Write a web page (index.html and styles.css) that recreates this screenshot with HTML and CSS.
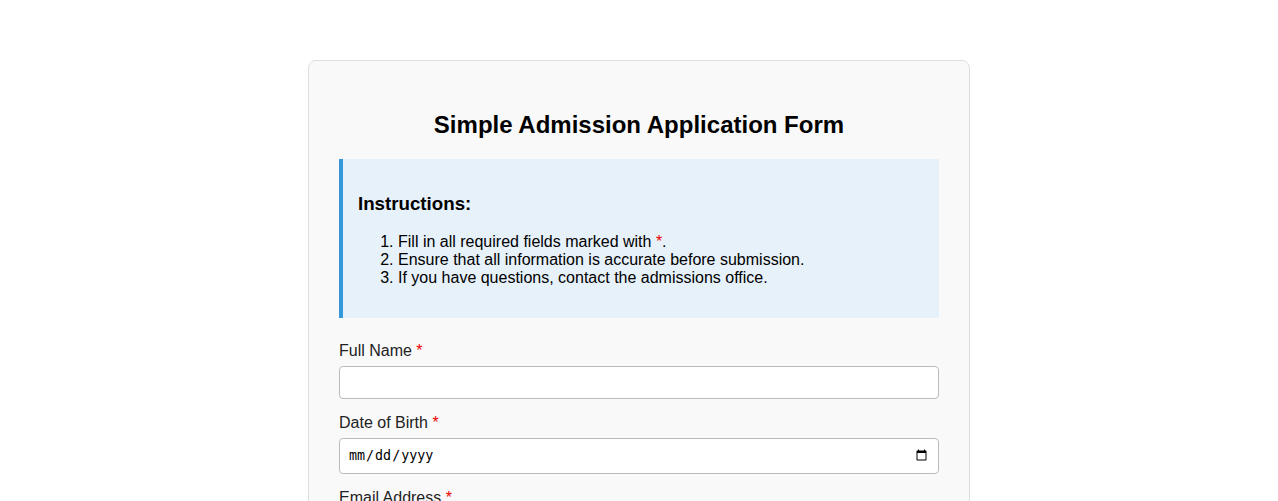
FILE: index.html
```html
<!DOCTYPE html>
<html lang="en">
<head>
  <meta charset="UTF-8">
  <title>Simple Admission Application Form</title>
  <meta name="viewport" content="width=device-width, initial-scale=1.0">
  <link rel="stylesheet" href="styles.css">
</head>
<body>
  <div class="container">
    <h2>Simple Admission Application Form</h2>
    <div class="instructions">
      <h3>Instructions:</h3>
      <ol>
        <li>Fill in all required fields marked with <span class="required">*</span>.</li>
        <li>Ensure that all information is accurate before submission.</li>
        <li>If you have questions, contact the admissions office.</li>
      </ol>
    </div>
    <form>
      <div class="form-group">
        <label for="fullname">Full Name <span class="required">*</span></label>
        <input type="text" id="fullname" name="fullname" required>
      </div>
      <div class="form-group">
        <label for="dob">Date of Birth <span class="required">*</span></label>
        <input type="date" id="dob" name="dob" required>
      </div>
      <div class="form-group">
        <label for="email">Email Address <span class="required">*</span></label>
        <input type="email" id="email" name="email" required>
      </div>
    </form>
  </div>
</body>
</html>
```

FILE: styles.css
```css
body { font-family: "Liberation Sans", Arial, sans-serif; margin: 0; padding: 20px; background: #fff; color: #000; }
.container { max-width: 600px; margin: 40px auto; padding: 30px; background: #f9f9f9; border: 1px solid #ddd; border-radius: 8px; }
h2 { text-align: center; }
.instructions { background: #e7f1fa; border-left: 4px solid #3498db; padding: 15px; margin-bottom: 24px; }
.required { color: #e00; }
.form-group { margin-bottom: 15px; }
.form-group label { display: block; margin-bottom: 6px; color: #222; }
.form-group input { width: 100%; box-sizing: border-box; padding: 8px; border: 1px solid #bbb; border-radius: 4px; }
```
